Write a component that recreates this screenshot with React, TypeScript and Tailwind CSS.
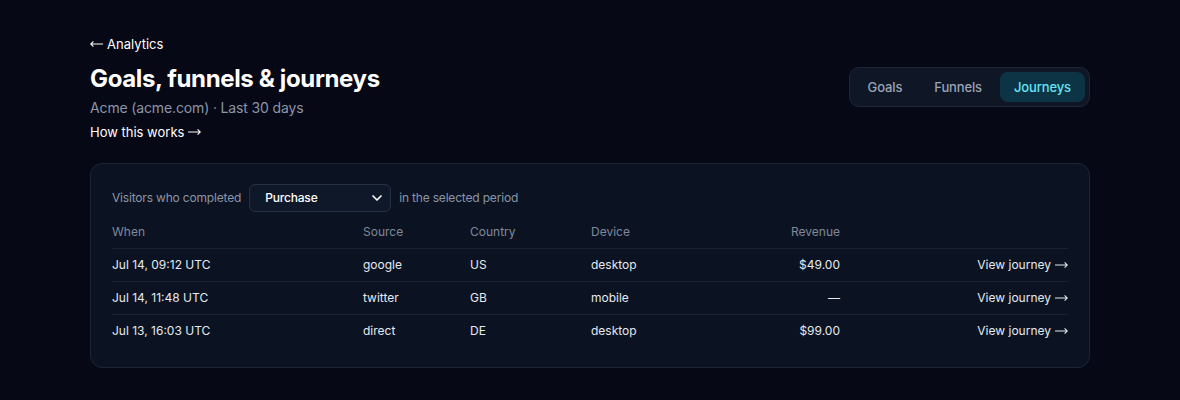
import { ChevronDown } from 'lucide-react'

const rows = [
  { when: 'Jul 14, 09:12 UTC', source: 'google', country: 'US', device: 'desktop', revenue: '$49.00' },
  { when: 'Jul 14, 11:48 UTC', source: 'twitter', country: 'GB', device: 'mobile', revenue: '—' },
  { when: 'Jul 13, 16:03 UTC', source: 'direct', country: 'DE', device: 'desktop', revenue: '$99.00' },
]

const tabs = ['Goals', 'Funnels', 'Journeys']

const cols = 'grid grid-cols-[251px_107px_121px_120px_129px_1fr] items-center'

// thin long arrow, like the "⟶" glyph in the system font
function Arrow({ dir, className = '' }: { dir: 'left' | 'right'; className?: string }) {
  return (
    <svg
      width="13"
      height="8"
      viewBox="0 0 13 8"
      fill="none"
      stroke="currentColor"
      strokeWidth="1.1"
      className={`inline-block align-middle ${dir === 'left' ? '-scale-x-100' : ''} ${className}`}
    >
      <path d="M0 4H12.3M9.6 1.4L12.3 4L9.6 6.6" />
    </svg>
  )
}

export default function App() {
  return (
    <div className="min-h-screen bg-[#060816] font-['Inter',sans-serif] text-white">
      <div className="mx-auto max-w-[1000px] pt-[35px] pb-8">
        {/* Header */}
        <div className="flex items-start justify-between">
          <div>
            <a className="flex items-center gap-[4px] text-[13px] leading-[18px] text-white">
              <Arrow dir="left" />
              <span>Analytics</span>
            </a>
            <h1 className="mt-[10px] text-[24px] font-bold leading-[32px] tracking-[-0.015em]">Goals, funnels &amp; journeys</h1>
            <p className="mt-[3px] text-[14px] leading-[20px] tracking-[-0.01em] text-[#8b95a7]">Acme (acme.com) · Last 30 days</p>
            <a className="mt-[5px] flex items-center gap-[4px] text-[13px] leading-[18px] text-white">
              <span>How this works</span>
              <Arrow dir="right" />
            </a>
          </div>
          <div className="mt-[32px] flex gap-1 rounded-[10px] border border-[#1e2637] bg-[#0f1626] p-1">
            {tabs.map(t => (
              <button
                key={t}
                className={`rounded-lg px-[14px] py-[6px] text-[13px] font-medium leading-[18px] tracking-[-0.01em] ${
                  t === 'Journeys' ? 'bg-[#0d3444] text-[#67e3f5]' : 'text-[#9aa4b5]'
                }`}
              >
                {t}
              </button>
            ))}
          </div>
        </div>

        {/* Journeys card */}
        <div className="mt-[22px] rounded-xl border border-[#1c2435] bg-[#0b1221] px-[21px] pt-[20px] pb-[20px]">
          <div className="flex items-center gap-2 text-[12px] tracking-[-0.015em] text-[#8b95a7]">
            <span>Visitors who completed</span>
            <div className="flex h-[28px] w-[142px] items-center justify-between rounded-md border border-[#263044] bg-[#0f1829] pl-[15px] pr-[5px] text-[12px] font-medium text-white">
              <span>Purchase</span>
              <ChevronDown className="h-4 w-4" strokeWidth={2.5} />
            </div>
            <span>in the selected period</span>
          </div>

          <div className={`${cols} mt-[8px] h-[28px] pb-[4px] text-[12px] text-[#7f899b]`}>
            <span>When</span>
            <span>Source</span>
            <span>Country</span>
            <span>Device</span>
            <span className="text-right">Revenue</span>
            <span />
          </div>

          {rows.map(r => (
            <div key={r.when} className={`${cols} h-[33px] border-t border-[#1a2233] text-[12px] text-[#e5e9f0]`}>
              <span>{r.when}</span>
              <span>{r.source}</span>
              <span>{r.country}</span>
              <span>{r.device}</span>
              <span className="text-right">{r.revenue}</span>
              <a className="flex items-center justify-end gap-[4px] text-[#e5e9f0]">
                <span>View journey</span>
                <Arrow dir="right" />
              </a>
            </div>
          ))}
        </div>
      </div>
    </div>
  )
}
